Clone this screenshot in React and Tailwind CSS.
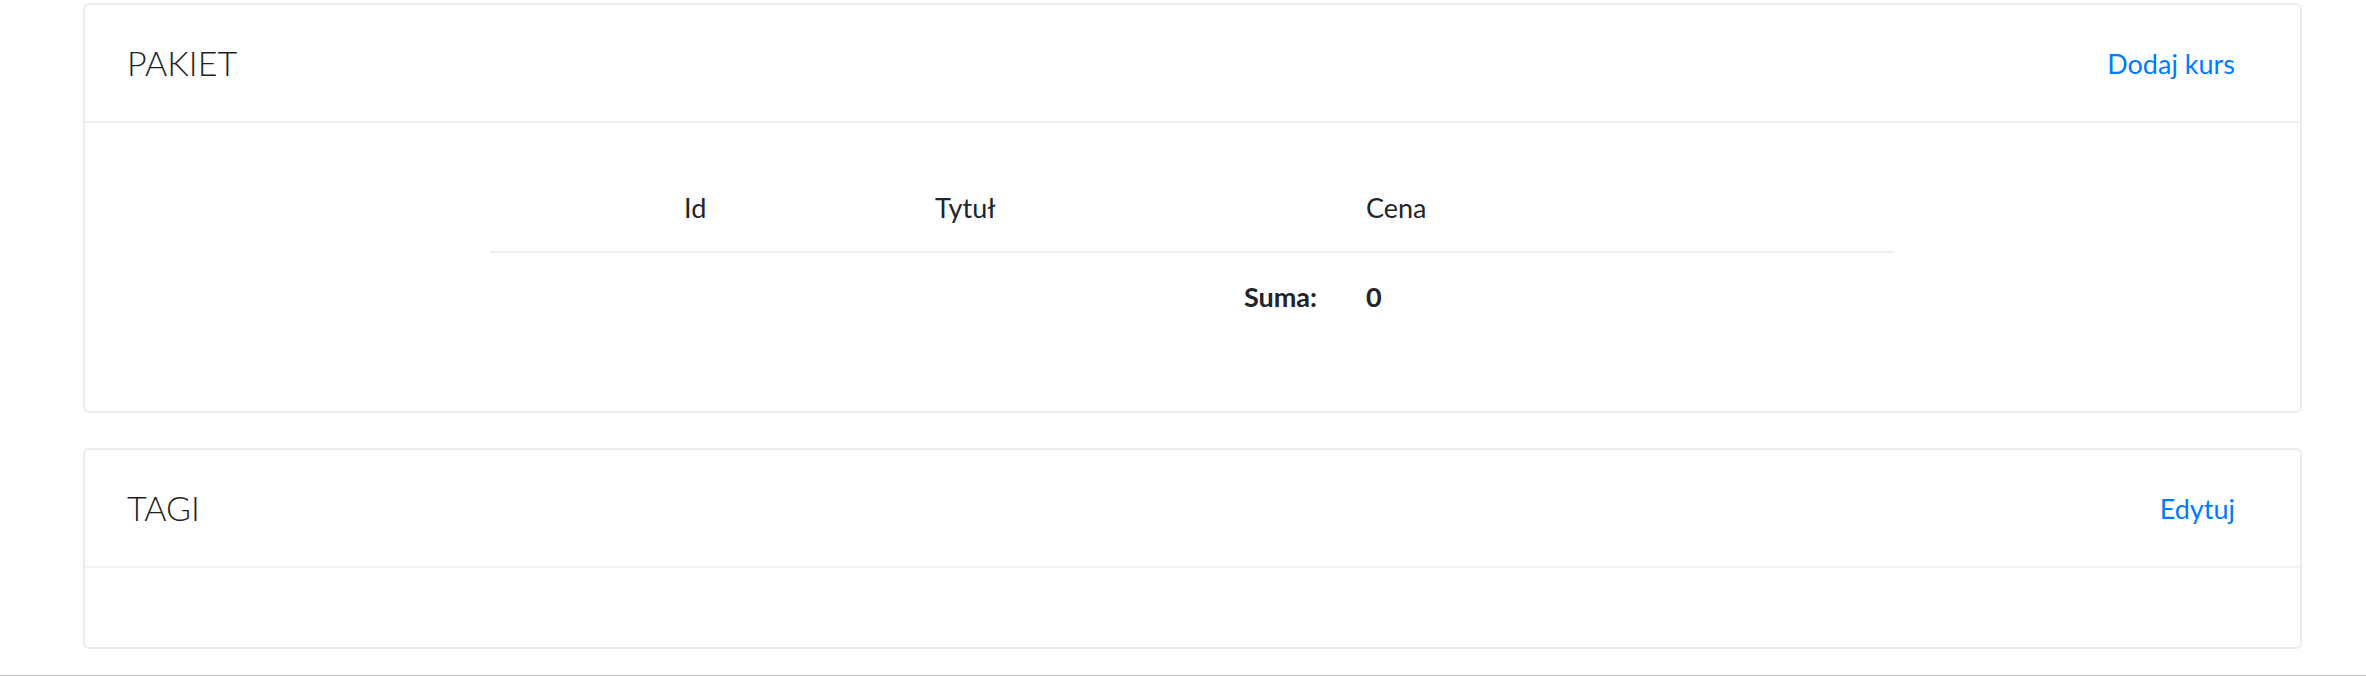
import React from 'react';

const font = { fontFamily: 'Lato, "Open Sans", sans-serif' };

function Card({ title, action, children, bodyClass }) {
  return (
    <div className="border-2 border-[#ececec] rounded-[6px] bg-white">
      <div className="h-[118px] flex items-center justify-between pl-[42px] pr-[65px] border-b-2 border-[#f1f1f1]">
        <h2 className="text-[34px] font-light text-[#1c1f23] leading-none">{title}</h2>
        <a href="#" className="text-[27px] text-[#007bff] leading-none">{action}</a>
      </div>
      <div className={bodyClass}>{children}</div>
    </div>
  );
}

export default function App() {
  return (
    <div className="w-[2366px] h-[676px] bg-white flex flex-col text-[#212529]" style={font}>
      <div className="pl-[83px] pr-[64px] pt-[3px] flex flex-col gap-[35px]">
        <Card title="PAKIET" action="Dodaj kurs" bodyClass="h-[288px] pt-[42px]">
          <div className="w-[1405px] mx-auto text-[27px]">
            <div className="grid grid-cols-[194px_251px_431px_1fr] h-[88px] items-center border-b-2 border-[#eeeeee]">
              <span />
              <span>Id</span>
              <span>Tytuł</span>
              <span>Cena</span>
            </div>
            <div className="grid grid-cols-[876px_1fr] h-[88px] items-center font-bold">
              <span className="text-right pr-[49px]">Suma:</span>
              <span>0</span>
            </div>
          </div>
        </Card>
        <Card title="TAGI" action="Edytuj" bodyClass="h-[79px]" />
      </div>
      <div className="mt-auto border-t border-[#c8c8c8]" />
    </div>
  );
}
